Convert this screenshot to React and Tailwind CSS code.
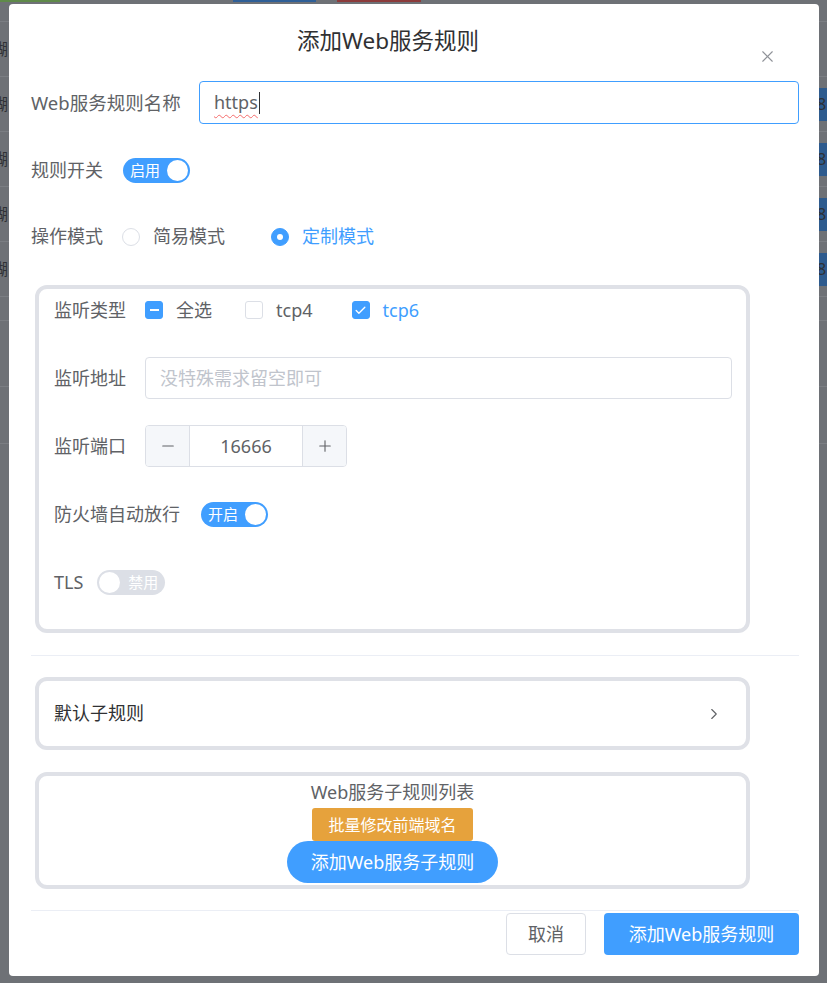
import { ChevronRight, X, Check, Minus, Plus } from "lucide-react";

const bgRows = [0, 1, 2, 3, 4];

function Switch({ on, text }) {
  if (on) {
    return (
      <div className="flex h-[25px] w-[67px] items-center rounded-full bg-[#409eff] pl-[7px] pr-[2px]">
        <span className="text-[15px] leading-none text-white">{text}</span>
        <span className="ml-auto h-[21px] w-[21px] rounded-full bg-white" />
      </div>
    );
  }
  return (
    <div className="flex h-[25px] w-[68px] items-center rounded-full bg-[#dcdfe6] pl-[2px] pr-[7px]">
      <span className="h-[21px] w-[21px] rounded-full bg-white" />
      <span className="ml-auto text-[15px] leading-none text-white">{text}</span>
    </div>
  );
}

function CheckBox({ state, label }) {
  const active = state !== "off";
  return (
    <label className="flex items-center gap-[13px]">
      <span
        className={`flex h-[18px] w-[18px] items-center justify-center rounded-[3px] border ${
          active ? "border-[#409eff] bg-[#409eff]" : "border-[#dcdfe6] bg-white"
        }`}
      >
        {state === "half" && <span className="h-[2px] w-[9px] bg-white" />}
        {state === "on" && <Check className="h-[13px] w-[13px] text-white" strokeWidth={2.5} />}
      </span>
      <span className={`text-[18px] ${state === "on" ? "text-[#409eff]" : "text-[#606266]"}`}>{label}</span>
    </label>
  );
}

function Radio({ checked, label }) {
  return (
    <label className="flex items-center gap-[13px]">
      <span
        className={`flex h-[18px] w-[18px] items-center justify-center rounded-full border ${
          checked ? "border-[#409eff] bg-[#409eff]" : "border-[#dcdfe6] bg-white"
        }`}
      >
        {checked && <span className="h-[6px] w-[6px] rounded-full bg-white" />}
      </span>
      <span className={`text-[18px] ${checked ? "text-[#409eff]" : "text-[#606266]"}`}>{label}</span>
    </label>
  );
}

export default function App() {
  return (
    <div className="relative h-[983px] w-[827px] overflow-hidden bg-[#6e7176] font-['Noto_Sans','Noto_Sans_CJK_SC',sans-serif]">
      {/* page behind the overlay */}
      <div className="flex h-[22px] items-start gap-[16px] border-b border-[#7b7e83]">
        <span className="h-[2px] w-[60px] bg-[#5f8a4a]" />
        <span className="ml-[157px] h-[2px] w-[83px] bg-[#2f5f97]" />
        <span className="ml-[5px] h-[2px] w-[84px] bg-[#8c3b3b]" />
      </div>
      {bgRows.map((i) => (
        <div key={i} className="flex h-[55px] items-center justify-between border-b border-[#7b7e83] text-[16px] text-[#2f3135]">
          <span className="-ml-[8px]">蝴</span>
          <span className={`mr-[-12px] flex h-[33px] w-[24px] items-center bg-[#2e5b8e] pl-[2px] ${i === 0 ? "opacity-0" : ""}`}>8</span>
        </div>
      ))}
      <div className="h-[24px] border-b border-[#7b7e83]" />
      <div className="h-[66px] border-b border-[#7b7e83]" />
      <div className="h-[57px] border-b border-[#7b7e83]" />

      {/* dialog */}
      <div className="absolute left-[9px] top-[4px] flex h-[972px] w-[810px] flex-col rounded-[4px] bg-white pl-[22px] pr-[20px]">
        <div className="relative pr-[54px] pt-[22px] text-center text-[22.5px] leading-[30px] text-[#303133]">
          添加Web服务规则
          <X className="absolute right-[22px] top-[43px] h-[19px] w-[19px] text-[#909399]" strokeWidth={1.4} />
        </div>

        <div className="mt-[25px] flex flex-col gap-[25px]">
          <div className="flex h-[43px] items-center">
            <span className="w-[168px] text-[18.5px] text-[#606266]">Web服务规则名称</span>
            <div className="flex h-[43px] flex-1 items-center rounded-[4px] border border-[#409eff] px-[14px] text-[18px] text-[#606266]">
              <span className="underline decoration-[#f56c6c] decoration-wavy decoration-1 underline-offset-[5px]">https</span>
              <span className="ml-[1px] h-[22px] w-[1px] bg-[#303133]" />
            </div>
          </div>

          <div className="flex h-[43px] items-center">
            <span className="w-[92px] text-[18px] text-[#606266]">规则开关</span>
            <Switch on text="启用" />
          </div>

          <div className="-mt-[2px] flex h-[43px] items-center">
            <span className="w-[91px] text-[18px] text-[#606266]">操作模式</span>
            <Radio label="简易模式" />
            <span className="w-[46px]" />
            <Radio checked label="定制模式" />
          </div>

          <div className="ml-[4px] mt-[2px] flex w-[715px] flex-col gap-[26px] rounded-[12px] border-4 border-[#dfe1e7] pb-[26px] pl-[15px] pr-[14px]">
            <div className="flex h-[42px] items-center">
              <span className="w-[91px] text-[18px] text-[#606266]">监听类型</span>
              <CheckBox state="half" label="全选" />
              <span className="w-[33px]" />
              <CheckBox state="off" label="tcp4" />
              <span className="w-[39px]" />
              <CheckBox state="on" label="tcp6" />
            </div>

            <div className="flex h-[42px] items-center">
              <span className="w-[91px] text-[18px] text-[#606266]">监听地址</span>
              <div className="flex h-[42px] flex-1 items-center rounded-[4px] border border-[#dcdfe6] px-[14px] text-[18px] text-[#c0c4cc]">
                没特殊需求留空即可
              </div>
            </div>

            <div className="flex h-[42px] items-center">
              <span className="w-[91px] text-[18px] text-[#606266]">监听端口</span>
              <div className="flex h-[42px] w-[202px] overflow-hidden rounded-[4px] border border-[#dcdfe6]">
                <span className="flex w-[44px] items-center justify-center border-r border-[#dcdfe6] bg-[#f5f7fa] text-[#606266]">
                  <Minus className="h-[18px] w-[18px]" strokeWidth={1.5} />
                </span>
                <span className="flex flex-1 items-center justify-center text-[18px] text-[#606266]">16666</span>
                <span className="flex w-[44px] items-center justify-center border-l border-[#dcdfe6] bg-[#f5f7fa] text-[#606266]">
                  <Plus className="h-[18px] w-[18px]" strokeWidth={1.5} />
                </span>
              </div>
            </div>

            <div className="flex h-[42px] items-center">
              <span className="mr-[21px] text-[18px] text-[#606266]">防火墙自动放行</span>
              <Switch on text="开启" />
            </div>

            <div className="flex h-[42px] items-center">
              <span className="mr-[14px] text-[18px] text-[#606266]">TLS</span>
              <Switch text="禁用" />
            </div>
          </div>
        </div>

        <div className="mt-[22px] h-px bg-[#ebeef5]" />

        <div className="ml-[4px] mt-[21px] flex h-[73px] w-[715px] items-center justify-between rounded-[12px] border-4 border-[#dfe1e7] pl-[15px] pr-[23px]">
          <span className="text-[18px] text-[#303133]">默认子规则</span>
          <ChevronRight className="h-[18px] w-[18px] text-[#606266]" strokeWidth={1.5} />
        </div>

        <div className="ml-[4px] mt-[22px] flex h-[117px] w-[715px] flex-col items-center rounded-[12px] border-4 border-[#dfe1e7]">
          <span className="text-[18px] leading-[32px] text-[#606266]">Web服务子规则列表</span>
          <button className="flex h-[33px] items-center rounded-[3px] bg-[#e6a23c] px-[16px] text-[16px] text-white">批量修改前端域名</button>
          <button className="flex h-[42px] items-center rounded-full bg-[#409eff] px-[24px] text-[18px] text-white">添加Web服务子规则</button>
        </div>

        <div className="mt-[21px] h-px bg-[#ebeef5]" />

        <div className="mt-[2px] flex justify-end gap-[18px]">
          <button className="h-[42px] w-[80px] rounded-[4px] border border-[#dcdfe6] bg-white text-[18px] text-[#606266]">取消</button>
          <button className="h-[42px] w-[195px] rounded-[4px] bg-[#409eff] text-[18px] text-white">添加Web服务规则</button>
        </div>
      </div>
    </div>
  );
}
